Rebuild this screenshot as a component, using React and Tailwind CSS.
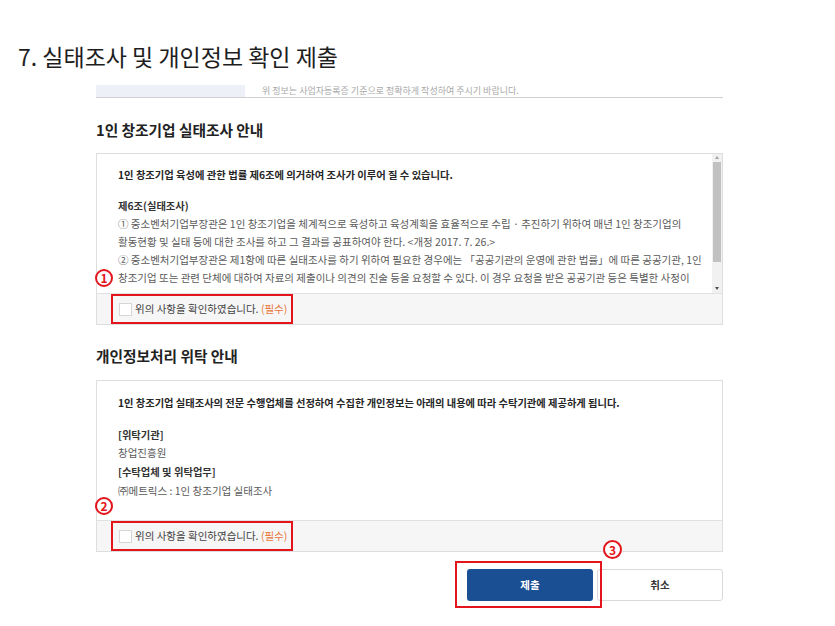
import React from 'react';

const FONT = "font-['Noto_Sans_CJK_KR','Noto_Sans',sans-serif]";

const lawLines = [
    '① 중소벤처기업부장관은 1인 창조기업을 체계적으로 육성하고 육성계획을 효율적으로 수립 · 추진하기 위하여 매년 1인 창조기업의',
    '활동현황 및 실태 등에 대한 조사를 하고 그 결과를 공표하여야 한다. <개정 2017. 7. 26.>',
    '② 중소벤처기업부장관은 제1항에 따른 실태조사를 하기 위하여 필요한 경우에는 「공공기관의 운영에 관한 법률」에 따른 공공기관, 1인',
    '창조기업 또는 관련 단체에 대하여 자료의 제출이나 의견의 진술 등을 요청할 수 있다. 이 경우 요청을 받은 공공기관 등은 특별한 사정이',
];

// checkbox row under each notice box, red outline = screenshot annotation
const ConfirmFooter = () => (
    <div className="relative h-[31px] border-t border-[#e1e1e1] bg-[#f6f6f6] flex items-center pl-[22px]">
        <span className="w-[13px] h-[13px] bg-white border border-[#d6d6d6]" />
        <span className="ml-[3px] text-[10.5px] text-[#444] whitespace-nowrap">
            위의 사항을 확인하였습니다. <span className="text-[#e8763a]">(필수)</span>
        </span>
        <div className="absolute left-[14px] top-0 w-[182px] h-[30px] border-2 border-[#e3141b]" />
    </div>
);

const Scrollbar = () => (
    <div className="absolute right-0 top-0 bottom-0 w-[10px] bg-[#f1f1f1]">
        <div className="absolute left-[3px] top-[2px] w-0 h-0 border-l-[2px] border-r-[2px] border-b-[3px] border-l-transparent border-r-transparent border-b-[#a3a3a3]" />
        <div className="absolute left-[1px] top-[8px] w-[8px] h-[100px] bg-[#c1c1c1]" />
        <div className="absolute left-[3px] bottom-[3px] w-0 h-0 border-l-[2px] border-r-[2px] border-t-[3px] border-l-transparent border-r-transparent border-t-[#505050]" />
    </div>
);

const Marker = ({ n, className }) => (
    <div className={`absolute rounded-full border-2 border-[#e3141b] flex items-center justify-center text-[12px] leading-none font-bold text-[#e3141b] bg-white ${className}`}>
        {n}
    </div>
);

const App = () => {
    return (
        <div className={`relative w-[835px] h-[626px] bg-white overflow-hidden ${FONT}`}>
            <h1 className="pl-[18px] pt-[41px] text-[23px] leading-[30px] text-[#1e1e1e] font-normal whitespace-nowrap">
                7. 실태조사 및 개인정보 확인 제출
            </h1>

            <div className="ml-[96px] w-[627px]">
                {/* top of previous section (cropped) */}
                <div className="mt-[14px] h-[13px] flex border-b border-[#d0d0d0]">
                    <div className="w-[149px] h-full bg-[#edf1f7]" />
                    <div className="ml-[17px] text-[9px] leading-[12px] text-[#a8a8a8] whitespace-nowrap">
                        위 정보는 사업자등록증 기준으로 정확하게 작성하여 주시기 바랍니다.
                    </div>
                </div>

                {/* 실태조사 안내 */}
                <h2 className="mt-[22px] text-[14.7px] leading-[20px] font-bold text-[#222] whitespace-nowrap">
                    1인 창조기업 실태조사 안내
                </h2>
                <div className="relative mt-[13px] border border-[#dedede]">
                    <div className="relative h-[139px] overflow-hidden">
                        <div className="pl-[21px] pt-[12px] text-[10.5px] leading-[18px] text-[#5a5a5a]">
                            <p className="text-[10.3px] font-bold text-[#262626] whitespace-nowrap">
                                1인 창조기업 육성에 관한 법률 제6조에 의거하여 조사가 이루어 질 수 있습니다.
                            </p>
                            <p className="mt-[13px] text-[10.3px] font-bold text-[#333] whitespace-nowrap">제6조(실태조사)</p>
                            {lawLines.map((line, i) => (
                                <p key={i} className="whitespace-nowrap">{line}</p>
                            ))}
                        </div>
                        <Scrollbar />
                    </div>
                    <ConfirmFooter />
                    <Marker n="1" className="-left-[2px] top-[115px] w-[18px] h-[18px]" />
                </div>

                {/* 개인정보처리 위탁 안내 */}
                <h2 className="mt-[21px] text-[14.7px] leading-[20px] font-bold text-[#222] whitespace-nowrap">
                    개인정보처리 위탁 안내
                </h2>
                <div className="relative mt-[14px] border border-[#dedede]">
                    <div className="h-[139px] pl-[21px] pt-[13px] text-[10.5px] leading-[18.7px] text-[#5a5a5a]">
                        <p className="text-[10.25px] font-bold text-[#262626] whitespace-nowrap">
                            1인 창조기업 실태조사의 전문 수행업체를 선정하여 수집한 개인정보는 아래의 내용에 따라 수탁기관에 제공하게 됩니다.
                        </p>
                        <p className="mt-[13px] text-[10.3px] font-bold text-[#333]">[위탁기관]</p>
                        <p>창업진흥원</p>
                        <p className="text-[10.3px] font-bold text-[#333]">[수탁업체 및 위탁업무]</p>
                        <p>㈜메트릭스 : 1인 창조기업 실태조사</p>
                    </div>
                    <ConfirmFooter />
                    <Marker n="2" className="-left-[2px] top-[116px] w-[18px] h-[18px]" />
                </div>

                <div className="mt-[17px] flex justify-end gap-[4px]">
                    <div className="relative">
                        <button className="w-[126px] h-[32px] rounded-[3px] bg-[#1b4f93] text-white text-[10.5px] font-bold">
                            제출
                        </button>
                        <div className="absolute -left-[12px] -top-[8px] w-[147px] h-[47px] border-2 border-[#e3141b]" />
                        <Marker n="3" className="left-[136px] -top-[29px] w-[19px] h-[19px]" />
                    </div>
                    <button className="w-[126px] h-[32px] rounded-[3px] bg-white border border-[#d9d9d9] text-[#333] text-[10.5px] font-bold">
                        취소
                    </button>
                </div>
            </div>
        </div>
    );
};

export default App;
